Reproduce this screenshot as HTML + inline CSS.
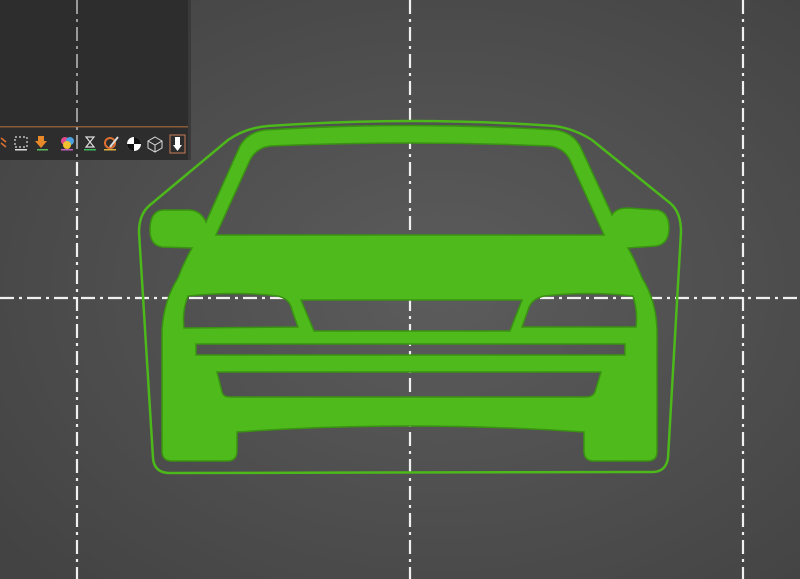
<!DOCTYPE html>
<html><head><style>
html,body{margin:0;padding:0;width:800px;height:579px;overflow:hidden;background:#505050;font-family:"Liberation Sans",sans-serif}
</style></head><body>
<svg width="800" height="579" viewBox="0 0 800 579" xmlns="http://www.w3.org/2000/svg" style="position:absolute;left:0;top:0">
<defs>
<radialGradient id="bg" cx="0.55" cy="0.5" r="0.7">
<stop offset="0" stop-color="#5c5c5c"/><stop offset="1" stop-color="#434343"/>
</radialGradient>
</defs>
<rect width="800" height="579" fill="url(#bg)"/>
<g stroke="#f0f0f0" stroke-width="2.2" stroke-dasharray="14,5,3,5" fill="none">
<line x1="77" y1="0" x2="77" y2="579"/>
<line x1="410" y1="0" x2="410" y2="579"/>
<line x1="743" y1="0" x2="743" y2="579"/>
<line x1="0" y1="298" x2="800" y2="298"/>
</g>
<!-- outer outline -->
<path d="M268 126 Q410 116 555 126 Q575 129 592 140 L670 203 Q681 212 681 232 L668 458 Q666 472 652 472 L168 473 Q154 472 153 458 L139 232 Q139 214 150 205 L228 140 Q245 128 268 126 Z" fill="none" stroke="#4cb81a" stroke-width="2.5"/>
<!-- body -->
<path fill-rule="evenodd" fill="#4fba1c" stroke="#3a9212" stroke-width="1.5" d="
M265 130 Q410 121 555 130 Q572 132 580 146 L612 215 Q616 208 628 208 L658 210 Q669 213 669 228 Q669 244 656 246 L628 248 Q636 262 642 278 Q656 300 657 330 L657 452 Q657 461 647 461 L594 461 Q584 461 584 451 L584 432 Q410 420 237 432 L237 451 Q237 461 227 461 L172 461 Q162 461 162 451 L162 330 Q164 300 178 278 Q184 262 192 248 L162 247 Q150 245 150 230 Q150 211 163 210 L190 210 Q201 211 206 222 L240 146 Q248 132 265 130 Z
M270 146 Q256 148 250 160 L216 235 L604 235 L570 160 Q564 148 550 146 Q410 140 270 146 Z
M188 296 Q235 291 278 296 Q290 299 292 310 L298 327 L184 328 Q182 310 188 296 Z
M301 300 L522 300 L510 331 L314 331 Z
M544 296 Q590 291 633 296 Q638 312 636 327 L522 327 L528 310 Q531 299 544 296 Z
M196 344 L625 344 L625 355 L196 355 Z
M217 372 L601 372 L595 392 Q593 397 586 397 L230 397 Q223 397 222 392 Z
"/>
<!-- top-left panel -->
<rect x="0" y="0" width="191" height="160" fill="#2d2d2e"/>
<rect x="0" y="126" width="191" height="1.5" fill="#8a5a35"/>
<rect x="188" y="0" width="3" height="160" fill="#3a3a3a"/>
<line x1="77" y1="0" x2="77" y2="160" stroke="#9a9a9a" stroke-width="2" stroke-dasharray="14,5,3,5"/>
<g font-size="12" fill="#ddd">
<path d="M1 138 L6 142 M1 143 L6 147" stroke="#e07030" stroke-width="1.5"/>
<rect x="15" y="137" width="12" height="10" fill="none" stroke="#ddd" stroke-width="1.2" stroke-dasharray="2,2"/>
<rect x="15" y="149" width="12" height="1.5" fill="#ddd"/>
<path d="M38 136 h6 v5 h3 l-6 7 l-6 -7 h3z" fill="#e98a2a"/>
<rect x="37" y="149" width="11" height="1.5" fill="#5cb85c"/>
<circle cx="65" cy="141" r="4" fill="#e04a8a"/><circle cx="70" cy="141" r="4" fill="#4aa0e0"/><circle cx="67" cy="145" r="4" fill="#f0c030"/>
<rect x="61" y="149" width="12" height="1.5" fill="#c060c0"/>
<path d="M86 137 h8 l-4 5 l4 5 h-8 l4 -5z" fill="none" stroke="#ddd" stroke-width="1.2"/>
<rect x="84" y="149" width="12" height="1.5" fill="#3cba5a"/>
<circle cx="110" cy="143" r="5" fill="none" stroke="#e07030" stroke-width="2"/>
<path d="M110 147 L118 137" stroke="#ddd" stroke-width="2"/>
<rect x="104" y="149" width="12" height="1.5" fill="#e0b040"/>
<circle cx="134" cy="144" r="7" fill="#fff"/>
<path d="M134 137 A7 7 0 0 1 141 144 L134 144Z M134 151 A7 7 0 0 1 127 144 L134 144Z" fill="#111"/>
<path d="M155 137 l7 4 v7 l-7 4 l-7 -4 v-7z M148 141 l7 4 l7 -4 M155 145 v7" fill="none" stroke="#ddd" stroke-width="1"/>
<rect x="170" y="135" width="15" height="18" fill="none" stroke="#b07050" stroke-width="1.2"/>
<path d="M175 137 h5 v8 h2 l-4.5 6 l-4.5 -6 h2z" fill="#fff"/>
</g>
</svg>
</body></html>
